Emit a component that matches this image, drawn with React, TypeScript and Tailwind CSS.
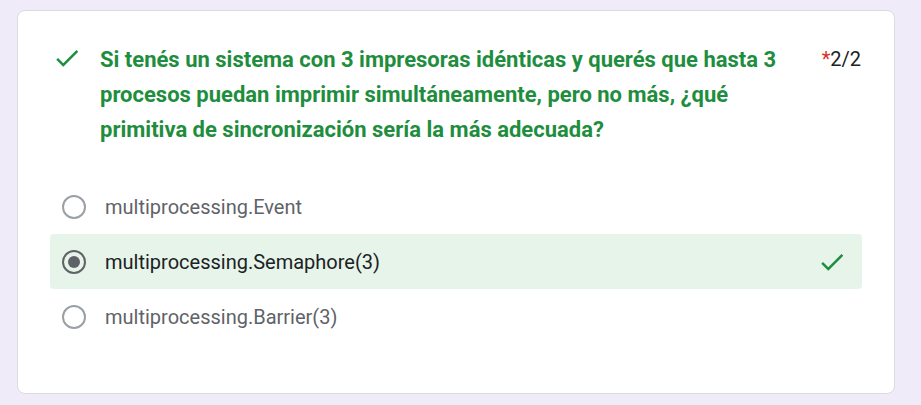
const options = [
  { label: "multiprocessing.Event", selected: false },
  { label: "multiprocessing.Semaphore(3)", selected: true },
  { label: "multiprocessing.Barrier(3)", selected: false },
];

const Check = ({ className }: { className?: string }) => (
  <svg viewBox="0 0 24 24" className={className} fill="currentColor">
    <path d="M9 16.17 4.83 12l-1.42 1.41L9 19 21 7l-1.41-1.41z" />
  </svg>
);

const Radio = ({ selected }: { selected: boolean }) => (
  <div
    className={
      selected
        ? "w-[24px] h-[24px] rounded-full border-2 border-[#5f6368] flex items-center justify-center shrink-0"
        : "w-[24px] h-[24px] rounded-full border-2 border-[#9aa0a6] shrink-0"
    }
  >
    {selected && <div className="w-[12px] h-[12px] rounded-full bg-[#5f6368]" />}
  </div>
);

export default function App() {
  return (
    <div className="min-h-[405px] bg-[#f0ebf8] pt-[10px] pl-[17px] font-['Roboto',sans-serif]">
      <div className="w-[878px] h-[384px] bg-white rounded-lg border border-[#dadce0] pt-[31px] px-[32px]">
        <div className="flex items-start">
          <Check className="w-[30px] h-[30px] text-[#1e8e3e] ml-[2px] mt-[1px] shrink-0" />
          <p className="ml-[18px] w-[690px] text-[22px] leading-[35px] font-bold text-[#1e8e3e]">
            Si tenés un sistema con 3 impresoras idénticas y querés que hasta 3 procesos puedan
            imprimir simultáneamente, pero no más, ¿qué primitiva de sincronización sería la más
            adecuada?
          </p>
          <div className="ml-auto text-[20px] leading-[35px] text-[#202124] pr-[1px]">
            <span className="text-[#d93025]">*</span>2/2
          </div>
        </div>

        <div className="mt-[32px] flex flex-col">
          {options.map((o) => (
            <div
              key={o.label}
              className={
                o.selected
                  ? "flex items-center h-[55px] px-[12px] rounded bg-[#e6f4ea]"
                  : "flex items-center h-[55px] px-[12px]"
              }
            >
              <Radio selected={o.selected} />
              <span
                className={
                  o.selected
                    ? "ml-[19px] text-[20px] text-[#202124]"
                    : "ml-[19px] text-[20px] text-[#5f6368]"
                }
              >
                {o.label}
              </span>
              {o.selected && <Check className="ml-auto mr-[3px] w-[30px] h-[30px] text-[#1e8e3e]" />}
            </div>
          ))}
        </div>
      </div>
    </div>
  );
}
